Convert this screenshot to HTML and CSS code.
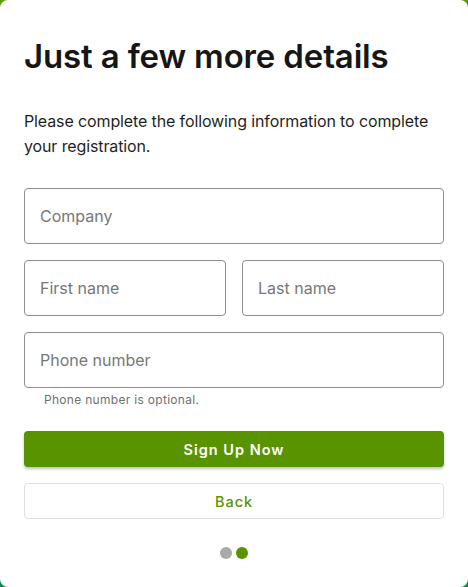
FILE: index.html
```html
<!DOCTYPE html>
<html lang="en">
<head>
<meta charset="utf-8">
<title>Just a few more details</title>
<link rel="stylesheet" href="styles.css">
</head>
<body>
<main class="card">
  <h1 class="title">Just a few more details</h1>
  <p class="intro">Please complete the following information to complete your registration.</p>
  <form class="form">
    <input class="field" type="text" placeholder="Company">
    <div class="row">
      <input class="field" type="text" placeholder="First name">
      <input class="field" type="text" placeholder="Last name">
    </div>
    <div class="group">
      <input class="field" type="tel" placeholder="Phone number">
      <div class="hint">Phone number is optional.</div>
    </div>
    <button class="btn btn-primary" type="button">Sign Up Now</button>
    <button class="btn btn-secondary" type="button">Back</button>
  </form>
  <div class="dots">
    <span class="dot"></span>
    <span class="dot active"></span>
  </div>
</main>
</body>
</html>
```

FILE: styles.css
```css
* { box-sizing: border-box; }
html, body { height: 100%; }
body {
  margin: 0;
  background: linear-gradient(180deg, #5a9a00 0%, #0a8a50 100%);
  font-family: Inter, "Noto Sans", sans-serif;
  color: #1a1a1a;
}
.card {
  height: 100%;
  background: #fff;
  border-radius: 8px;
  padding: 32px 24px 0;
  display: flex;
  flex-direction: column;
}
.title {
  margin: 0;
  font-size: 33px;
  font-weight: 600;
  line-height: 48px;
  letter-spacing: -0.15px;
  color: #161616;
}
.intro {
  margin: 29px 0 0;
  font-size: 16px;
  line-height: 25px;
  letter-spacing: -0.12px;
  color: #1f1f1f;
}
.form {
  margin-top: 29px;
  display: flex;
  flex-direction: column;
}
.field {
  display: block;
  width: 100%;
  height: 56px;
  border: 1px solid #8f8f8f;
  border-radius: 4px;
  padding: 0 15px;
  font-family: inherit;
  font-size: 16px;
  color: #1a1a1a;
  background: #fff;
}
.field::placeholder { color: #777; }
.row {
  margin-top: 16px;
  display: grid;
  grid-template-columns: 1fr 1fr;
  gap: 16px;
}
.group { margin-top: 16px; }
.hint {
  padding: 4px 0 0 20px;
  font-size: 12px;
  line-height: 16px;
  letter-spacing: 0.3px;
  color: #707070;
}
.btn {
  display: block;
  width: 100%;
  height: 36px;
  border-radius: 4px;
  font-family: Inter, "Noto Sans", sans-serif;
  font-size: 14.5px;
  font-weight: 600;
  letter-spacing: 1px;
  cursor: pointer;
}
.btn-primary {
  margin-top: 23px;
  background: #5a9300;
  color: #fff;
  border: none;
  box-shadow: 0 2px 3px rgba(0,0,0,0.25);
}
.btn-secondary {
  margin-top: 16px;
  background: #fff;
  color: #5a9300;
  border: 1px solid #e0e0e0;
  font-weight: 500;
}
.dots {
  margin-top: 28px;
  display: flex;
  justify-content: center;
  gap: 4px;
}
.dot {
  width: 12px;
  height: 12px;
  border-radius: 50%;
  background: #aaa;
}
.dot.active { background: #5a9300; }
```
